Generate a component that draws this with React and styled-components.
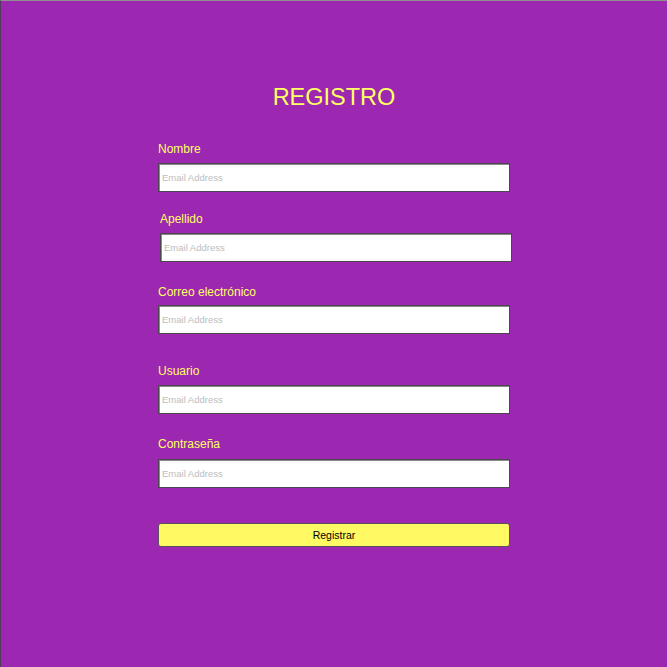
import React from "react";
import styled, { createGlobalStyle } from "styled-components";

const Global = createGlobalStyle`
  html, body { margin: 0; padding: 0; }
  body { background: #9c27b0; font-family: "Liberation Sans", Arial, sans-serif; }
  * { box-sizing: border-box; }
`;

const Page = styled.div`
  width: 667px;
  height: 667px;
  background: #9c27b0;
  border-top: 1px solid #8f8f8f;
  border-left: 1px solid #553a5e;
  display: flex;
  justify-content: center;
`;

const Form = styled.form`
  width: 352px;
  display: flex;
  flex-direction: column;
  padding-top: 82px;
`;

const Title = styled.h1`
  margin: 0;
  font-size: 23.5px;
  line-height: 28px;
  font-weight: 400;
  color: #ffff66;
  text-align: center;
`;

const Field = styled.div`
  display: flex;
  flex-direction: column;
  margin-top: ${(p) => p.$top}px;
  margin-left: ${(p) => p.$shift || 0}px;
`;

const Label = styled.label`
  font-size: 12px;
  line-height: 14px;
  color: #ffff66;
  margin-bottom: ${(p) => p.$gap}px;
`;

const Input = styled.input`
  width: 352px;
  height: 29px;
  border: 1px solid #4d4452;
  box-shadow: inset 1px 1px 0 #8a8a8a;
  background: #fff;
  padding: 0 3px;
  font-family: "Liberation Sans", Arial, sans-serif;
  font-size: 9.5px;
  outline: none;
  &::placeholder { color: #bdbdbd; }
`;

const Button = styled.button`
  margin-top: 35px;
  width: 352px;
  height: 24px;
  background: #fffa63;
  border: 1px solid #5a5060;
  border-radius: 3px;
  color: #000;
  font-family: "Liberation Sans", Arial, sans-serif;
  font-size: 10.5px;
  padding: 0;
`;

const fields = [
  { label: "Nombre", top: 31, gap: 7 },
  { label: "Apellido", top: 20, gap: 7, shift: 2 },
  { label: "Correo electrónico", top: 23, gap: 6 },
  { label: "Usuario", top: 30, gap: 7 },
  { label: "Contraseña", top: 23, gap: 8 },
];

export default function App() {
  return (
    <>
      <Global />
      <Page>
        <Form onSubmit={(e) => e.preventDefault()}>
          <Title>REGISTRO</Title>
          {fields.map((f) => (
            <Field key={f.label} $top={f.top} $shift={f.shift}>
              <Label $gap={f.gap}>{f.label}</Label>
              <Input placeholder="Email Address" />
            </Field>
          ))}
          <Button type="submit">Registrar</Button>
        </Form>
      </Page>
    </>
  );
}
